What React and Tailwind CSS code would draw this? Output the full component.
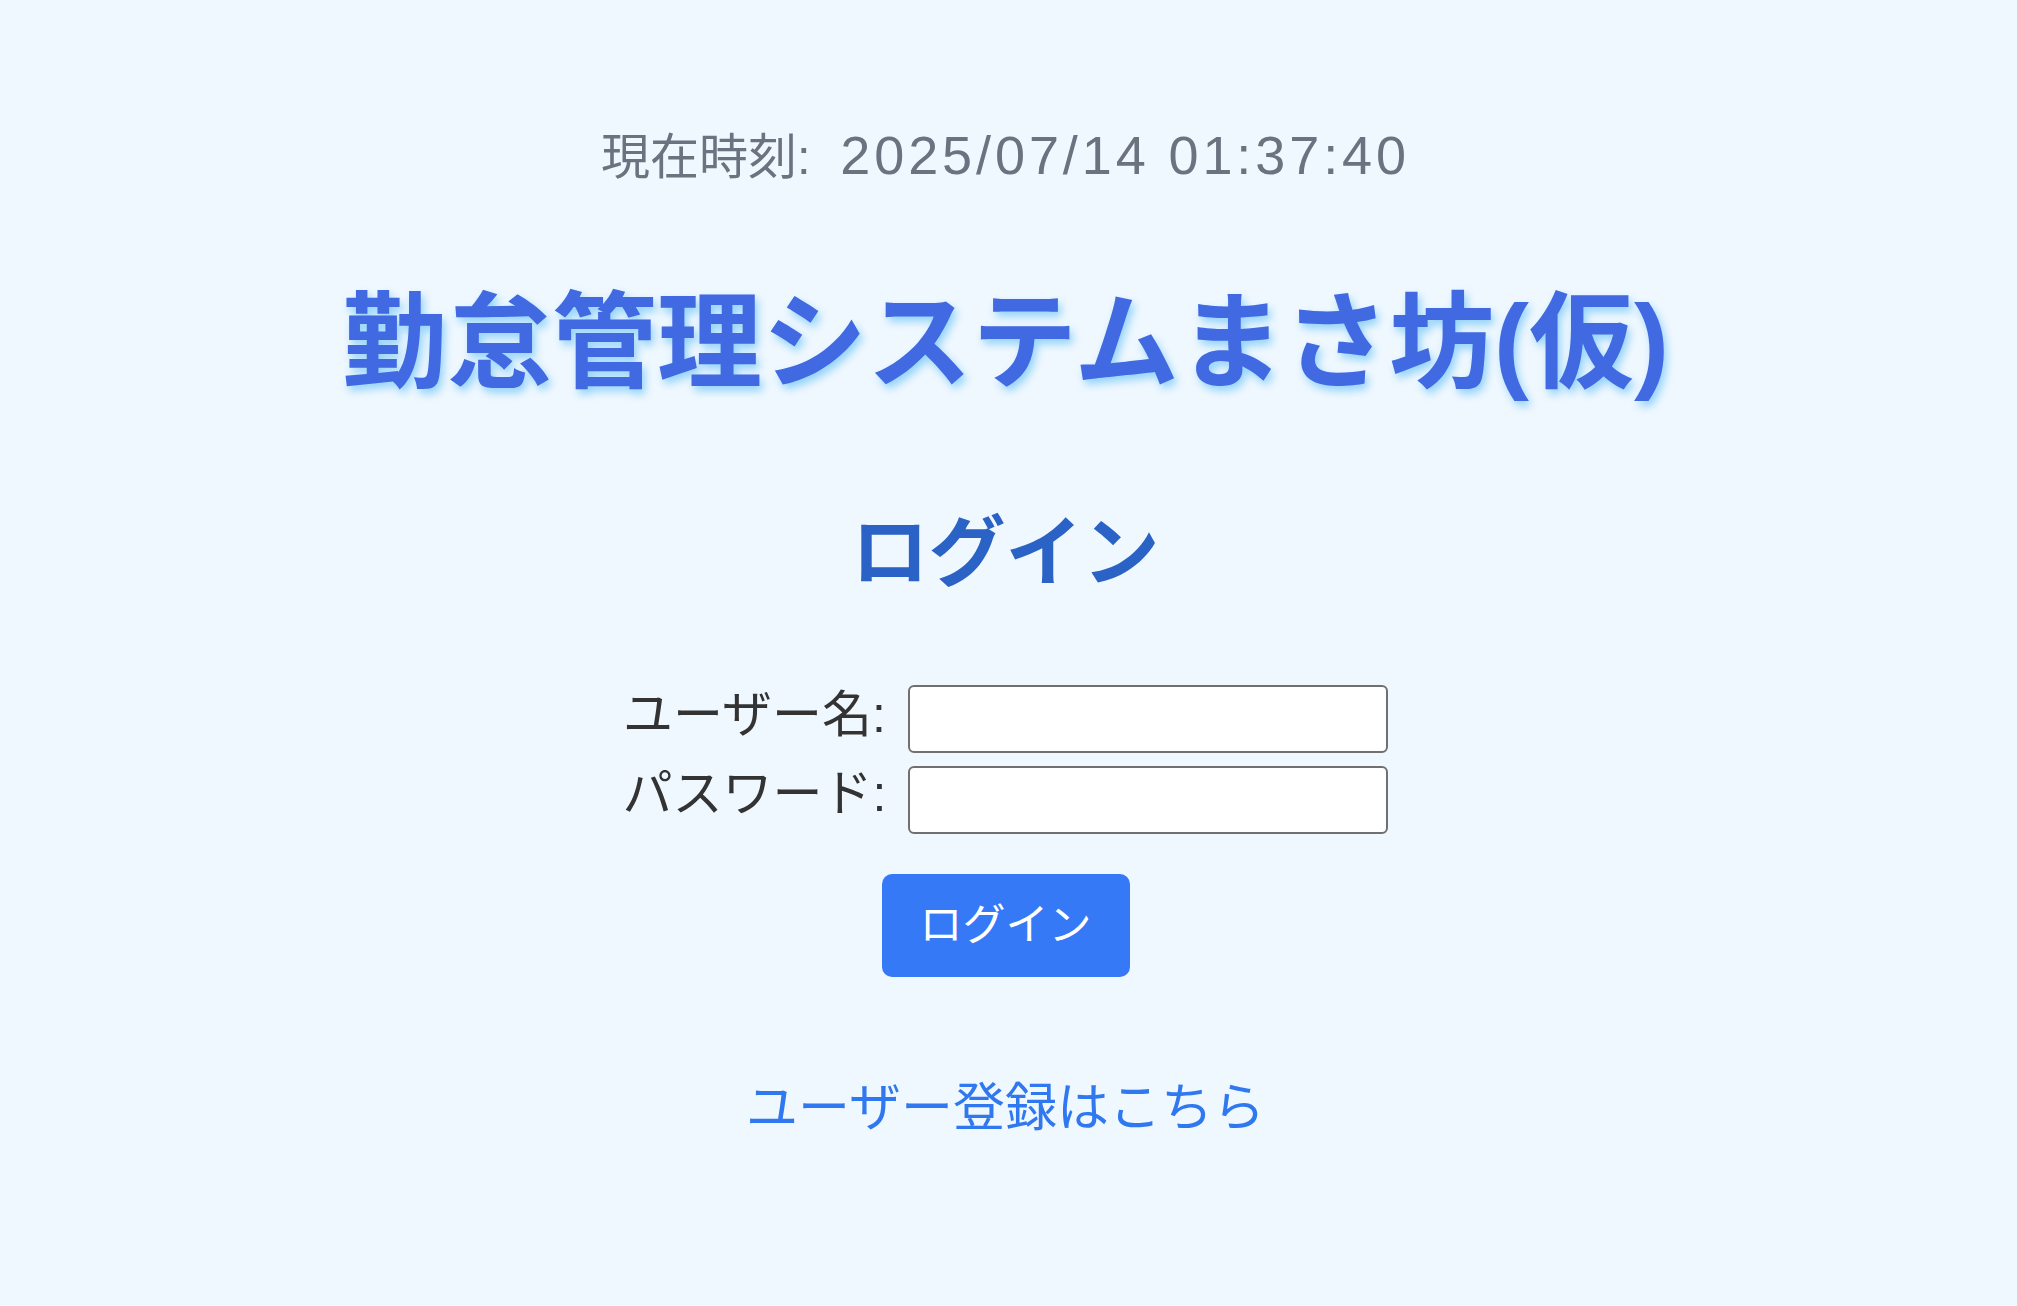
import React from "react";

export default function App() {
  return (
    <div className="min-h-screen bg-[#f0f8ff] font-['Liberation_Sans','Noto_Sans_CJK_JP',sans-serif] flex flex-col items-center pt-[125px] pr-[6px]">
      {/* Clock */}
      <p className="text-[49px] leading-[60px] text-[#6b7280] whitespace-nowrap">
        現在時刻:{" "}
        <span className="ml-[16px] text-[54px] leading-[60px] tracking-[3.9px]">
          2025/07/14 01:37:40
        </span>
      </p>

      {/* Title */}
      <h1 className="mt-[96px] text-[105px] leading-[120px] font-bold text-[#4169e1] whitespace-nowrap [text-shadow:3px_5px_8px_rgba(135,206,250,0.9)]">
        勤怠管理システムまさ坊(仮)
      </h1>

      {/* Login form */}
      <h2 className="mt-[105px] text-[77px] leading-[90px] font-bold text-[#2a62c6]">
        ログイン
      </h2>

      <form className="mt-[87px] flex flex-col items-center gap-[13px]">
        <div className="flex items-center gap-[22px]">
          <label className="text-[50px] leading-[52px] text-[#333] pb-[8px]">
            ユーザー名:
          </label>
          <input
            type="text"
            className="w-[480px] h-[68px] bg-white border-2 border-[#707070] rounded-[6px]"
          />
        </div>
        <div className="flex items-center gap-[22px]">
          <label className="text-[50px] leading-[52px] text-[#333] pb-[12px]">
            パスワード:
          </label>
          <input
            type="password"
            className="w-[480px] h-[68px] bg-white border-2 border-[#707070] rounded-[6px]"
          />
        </div>
        <button
          type="button"
          className="mt-[27px] w-[248px] h-[103px] rounded-[10px] bg-[#3579f6] text-white text-[43px] flex items-center justify-center"
        >
          ログイン
        </button>
      </form>

      <a href="#" className="mt-[101px] text-[52px] leading-[60px] text-[#2f78f0]">
        ユーザー登録はこちら
      </a>
    </div>
  );
}
